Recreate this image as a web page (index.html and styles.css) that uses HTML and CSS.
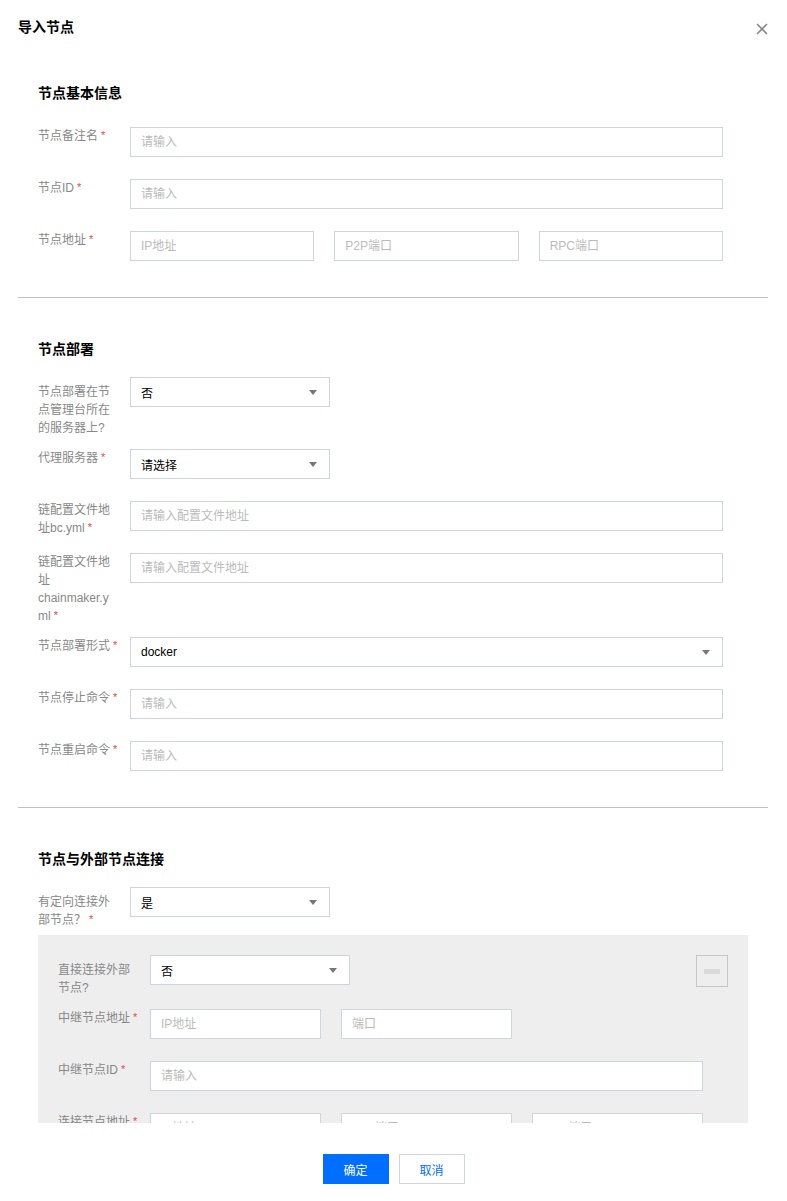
FILE: index.html
```html
<!DOCTYPE html>
<html>
<head>
  <meta charset="utf-8">
  <title>导入节点</title>
  <link rel="stylesheet" href="styles.css">
</head>
<body>
  <div class="dialog">
    <div class="dialog-header">
      <h3 class="dialog-title">导入节点</h3>
      <button class="dialog-close" title="关闭">
        <svg width="12" height="12" viewBox="0 0 12 12">
          <path d="M1 1 L11 11 M11 1 L1 11" stroke="#888" stroke-width="1.6" fill="none"/>
        </svg>
      </button>
    </div>

    <div class="dialog-body">
      <!-- 基本信息 -->
      <div class="section">
        <h4 class="section-title">节点基本信息</h4>

        <div class="form-item">
          <label class="form-label">节点备注名<span class="req">*</span></label>
          <div class="form-control"><input class="input" placeholder="请输入"></div>
        </div>
        <div class="form-item">
          <label class="form-label">节点ID<span class="req">*</span></label>
          <div class="form-control"><input class="input" placeholder="请输入"></div>
        </div>
        <div class="form-item">
          <label class="form-label">节点地址<span class="req">*</span></label>
          <div class="form-control input-group">
            <input class="input" placeholder="IP地址">
            <input class="input" placeholder="P2P端口">
            <input class="input" placeholder="RPC端口">
          </div>
        </div>
      </div>

      <!-- 部署 -->
      <div class="section">
        <h4 class="section-title">节点部署</h4>

        <div class="form-item">
          <label class="form-label tall">节点部署在节点管理台所在的服务器上?</label>
          <div class="form-control">
            <div class="select short"><span>否</span><i class="arrow"></i></div>
          </div>
        </div>
        <div class="form-item">
          <label class="form-label">代理服务器<span class="req">*</span></label>
          <div class="form-control">
            <div class="select short"><span>请选择</span><i class="arrow"></i></div>
          </div>
        </div>
        <div class="form-item">
          <label class="form-label">链配置文件地址bc.yml<span class="req">*</span></label>
          <div class="form-control"><input class="input" placeholder="请输入配置文件地址"></div>
        </div>
        <div class="form-item">
          <label class="form-label">链配置文件地址 chainmaker.yml<span class="req">*</span></label>
          <div class="form-control"><input class="input" placeholder="请输入配置文件地址"></div>
        </div>
        <div class="form-item">
          <label class="form-label">节点部署形式<span class="req">*</span></label>
          <div class="form-control">
            <div class="select"><span>docker</span><i class="arrow"></i></div>
          </div>
        </div>
        <div class="form-item">
          <label class="form-label">节点停止命令<span class="req">*</span></label>
          <div class="form-control"><input class="input" placeholder="请输入"></div>
        </div>
        <div class="form-item">
          <label class="form-label">节点重启命令<span class="req">*</span></label>
          <div class="form-control"><input class="input" placeholder="请输入"></div>
        </div>
      </div>

      <!-- 外部节点连接 -->
      <div class="section">
        <h4 class="section-title">节点与外部节点连接</h4>

        <div class="form-item">
          <label class="form-label tall">有定向连接外部节点？<span class="req">*</span></label>
          <div class="form-control">
            <div class="select short"><span>是</span><i class="arrow"></i></div>
          </div>
        </div>

        <div class="sub-panel">
          <button class="btn-remove" title="删除"><span></span></button>

          <div class="form-item">
            <label class="form-label tall">直接连接外部节点?</label>
            <div class="form-control">
              <div class="select short"><span>否</span><i class="arrow"></i></div>
            </div>
          </div>
          <div class="form-item">
            <label class="form-label">中继节点地址<span class="req">*</span></label>
            <div class="form-control input-group">
              <input class="input" placeholder="IP地址">
              <input class="input" placeholder="端口">
            </div>
          </div>
          <div class="form-item">
            <label class="form-label">中继节点ID<span class="req">*</span></label>
            <div class="form-control"><input class="input" placeholder="请输入"></div>
          </div>
          <div class="form-item">
            <label class="form-label">连接节点地址<span class="req">*</span></label>
            <div class="form-control input-group">
              <input class="input" placeholder="IP地址">
              <input class="input" placeholder="P2P端口">
              <input class="input" placeholder="RPC端口">
            </div>
          </div>
          <div class="form-item">
            <label class="form-label">连接节点ID<span class="req">*</span></label>
            <div class="form-control"><input class="input" placeholder="请输入"></div>
          </div>
        </div>
      </div>
    </div>

    <div class="dialog-footer">
      <button class="btn btn-primary">确定</button>
      <button class="btn">取消</button>
    </div>
  </div>
</body>
</html>
```

FILE: styles.css
```css
body {
  margin: 0;
  background: #fff;
  color: #000;
  font-family: "Liberation Sans", "Noto Sans CJK SC", sans-serif;
  font-size: 12px;
}

.dialog {
  width: 787px;
  height: 1201px;
}

.dialog-header {
  display: flex;
  justify-content: space-between;
  align-items: flex-start;
  height: 60px;
  padding: 17px 19px 0 18px;
  box-sizing: border-box;
}

.dialog-title {
  margin: 0;
  font-size: 14px;
  line-height: 20px;
  font-weight: bold;
}

.dialog-close {
  border: none;
  background: none;
  padding: 0;
  margin-top: 6px;
  width: 12px;
  height: 12px;
  cursor: pointer;
}

.dialog-close svg {
  display: block;
}

.dialog-body {
  height: 1063px;
  overflow: hidden;
  padding: 0 19px 0 18px;
}

.section {
  padding: 41px 20px 14px;
}

.section + .section {
  border-top: 1px solid #c2c2c2;
}

.section:first-child {
  padding-top: 23px;
}

.section-title {
  margin: 0 0 18px;
  font-size: 14px;
  line-height: 20px;
  font-weight: bold;
}

.section:first-child .section-title {
  margin-bottom: 24px;
}

.form-item {
  display: flex;
  align-items: flex-start;
  margin-bottom: 12px;
  padding-right: 25px;
}

.form-label {
  width: 76px;
  margin-right: 16px;
  flex-shrink: 0;
  color: #888;
  line-height: 18px;
  overflow-wrap: break-word;
}

.form-label.tall {
  padding-top: 6px;
}

/* the star sits after the text but must not push it onto a new line */
.req {
  position: absolute;
  margin-left: 3px;
  color: #e54545;
  font-size: 11px;
  line-height: 16px;
}

.form-control {
  flex: 1;
  min-width: 0;
  padding-bottom: 10px;
}

.input-group {
  display: grid;
  grid-template-columns: repeat(3, 1fr);
  gap: 20px;
}

.input {
  display: block;
  width: 100%;
  height: 30px;
  box-sizing: border-box;
  border: 1px solid #cfd5de;
  padding: 0 10px;
  font-family: inherit;
  font-size: 12px;
  color: #000;
  background: #fff;
  outline: none;
}

.input::placeholder {
  color: #bbb;
}

.select {
  display: flex;
  justify-content: space-between;
  align-items: center;
  height: 30px;
  box-sizing: border-box;
  border: 1px solid #cfd5de;
  background: #fff;
  padding: 0 12px 0 10px;
  cursor: pointer;
}

.select.short {
  width: 200px;
}

.arrow {
  width: 0;
  height: 0;
  border-left: 4px solid transparent;
  border-right: 4px solid transparent;
  border-top: 5px solid #777;
}

.sub-panel {
  position: relative;
  margin-top: -6px;
  padding: 20px;
  background: #eee;
}

.btn-remove {
  position: absolute;
  top: 20px;
  right: 20px;
  width: 32px;
  height: 32px;
  box-sizing: border-box;
  border: 1px solid #c6c6c6;
  background: transparent;
  padding: 0;
  display: flex;
  justify-content: center;
  align-items: center;
  cursor: pointer;
}

.btn-remove span {
  width: 16px;
  height: 5px;
  background: #d9d9d9;
}

.dialog-footer {
  display: flex;
  justify-content: center;
  gap: 10px;
  padding-top: 31px;
}

.btn {
  width: 66px;
  height: 30px;
  box-sizing: border-box;
  border: 1px solid #cfd5de;
  background: #fff;
  color: #006eff;
  font-family: inherit;
  font-size: 12px;
  cursor: pointer;
}

.btn-primary {
  border-color: #006eff;
  background: #006eff;
  color: #fff;
}
```
